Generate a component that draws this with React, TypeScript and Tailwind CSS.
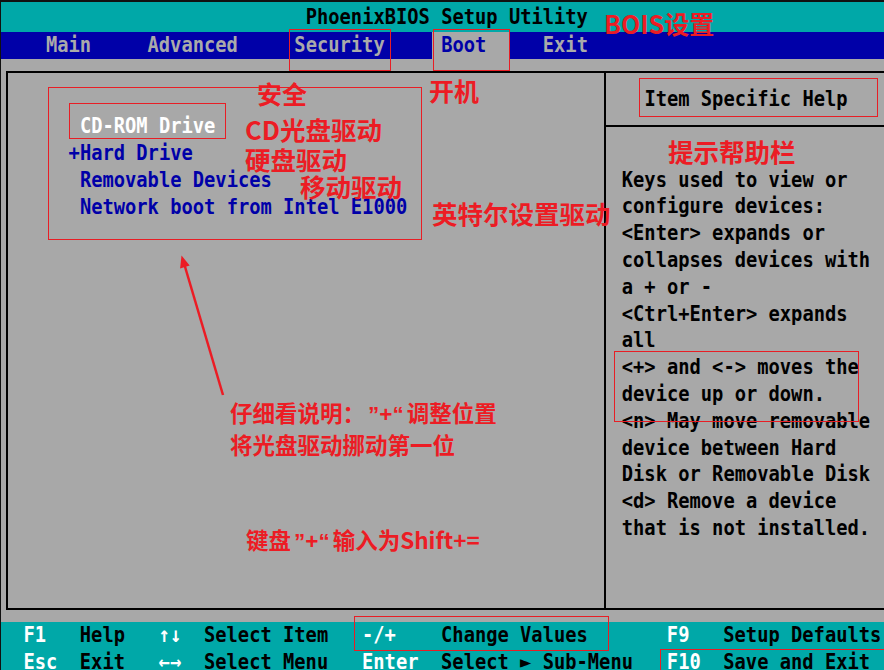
import type { ReactNode } from "react";
import clsx from "clsx";

// VGA text-mode look: one cell is 11.29px wide, 26.8px tall
function T({ children, className }: { children: ReactNode; className?: string }) {
  return (
    <span className={clsx("inline-block whitespace-pre scale-y-[1.15]", className)}>
      {children}
    </span>
  );
}

// the quote marks in the notes are narrow (latin) ones, not full-width
function Q({ children }: { children: ReactNode }) {
  return <span className="font-['Liberation_Sans',sans-serif] px-[3px]">{children}</span>;
}

const bootItems = [
  { text: " CD-ROM Drive", color: "text-white" },
  { text: "+Hard Drive", color: "text-[#0000a8]" },
  { text: " Removable Devices", color: "text-[#0000a8]" },
  { text: " Network boot from Intel E1000", color: "text-[#0000a8]" },
];

const helpLines = [
  "Keys used to view or",
  "configure devices:",
  "<Enter> expands or",
  "collapses devices with",
  "a + or -",
  "<Ctrl+Enter> expands",
  "all",
  "<+> and <-> moves the",
  "device up or down.",
  "<n> May move removable",
  "device between Hard",
  "Disk or Removable Disk",
  "<d> Remove a device",
  "that is not installed.",
];

const statusRows = [
  ["F1", "Help", "↑↓", "Select Item", "-/+", "Change Values", "F9", "Setup Defaults"],
  ["Esc", "Exit", "←→", "Select Menu", "Enter", "Select ► Sub-Menu", "F10", "Save and Exit"],
];

const note =
  "absolute leading-none whitespace-nowrap [text-spacing-trim:space-all] font-['Noto_Sans_CJK_SC',sans-serif] font-bold text-[#ec1c24]";

const App = () => {
  return (
    <div className="relative w-[884px] h-[670px] overflow-hidden bg-[#a8a8a8]">
      <div className="h-full border-t-2 border-l border-[#111] font-['DejaVu_Sans_Mono',monospace] text-[18.75px] font-bold flex flex-col">
        {/* title */}
        <div className="h-[30px] shrink-0 bg-[#00a8a8] flex items-center pl-[304.7px] text-black">
          <T>PhoenixBIOS Setup Utility</T>
        </div>

        {/* menu bar */}
        <div className="h-[27px] shrink-0 bg-[#0000a8] flex items-stretch text-[#aaaaaa]">
          <div className="flex items-center pl-[45px]">
            <T>Main</T>
          </div>
          <div className="flex items-center ml-[56.4px]">
            <T>Advanced</T>
          </div>
          <div className="flex items-center ml-[56.5px]">
            <T>Security</T>
          </div>
          <div className="flex items-center ml-[47.3px] w-[77px] pl-[9.2px] bg-[#a8a8a8] text-[#0000a8]">
            <T>Boot</T>
          </div>
          <div className="flex items-center ml-[33.8px]">
            <T>Exit</T>
          </div>
        </div>

        <div className="h-[12px] shrink-0" />

        {/* main frame */}
        <div className="h-[539px] shrink-0 w-[900px] ml-[5px] border-2 border-black flex">
          <div className="w-[596px] shrink-0 pt-[40.2px] pl-[60.6px]">
            {bootItems.map((item) => (
              <div key={item.text} className={clsx("h-[26.8px] leading-[26.8px]", item.color)}>
                <T>{item.text}</T>
              </div>
            ))}
          </div>

          <div className="flex-1 border-l-2 border-black flex flex-col text-black">
            <div className="h-[54px] shrink-0 border-b-2 border-black flex items-center pl-[38.4px]">
              <T>Item Specific Help</T>
            </div>
            <div className="pt-[39.6px] pl-[15.8px]">
              {helpLines.map((line) => (
                <div key={line} className="h-[26.8px] leading-[26.8px]">
                  <T>{line}</T>
                </div>
              ))}
            </div>
          </div>
        </div>

        <div className="h-[12px] shrink-0" />

        {/* key legend */}
        <div className="flex-1 bg-[#00a8a8] pl-[22.4px]">
          <div className="grid grid-cols-[56.45px_79.03px_45.16px_158.06px_79.03px_225.8px_56.45px_1fr] auto-rows-[26.8px] leading-[26.8px] whitespace-nowrap">
            {statusRows.map((row) =>
              row.map((cell, i) => (
                <div key={row[0] + i} className={i % 2 === 0 ? "text-white" : "text-black"}>
                  <T>{cell}</T>
                </div>
              ))
            )}
          </div>
        </div>
      </div>

      {/* red annotations drawn over the screenshot */}
      <div className="absolute left-[289px] top-[29px] w-[102px] h-[42px] border border-[#e81e25]" />
      <div className="absolute left-[433px] top-[29px] w-[77px] h-[42px] border border-[#e81e25]" />
      <div className="absolute left-[48px] top-[87px] w-[374px] h-[153px] border border-[#e81e25]" />
      <div className="absolute left-[69px] top-[103px] w-[157px] h-[36px] border border-[#e81e25]" />
      <div className="absolute left-[639px] top-[78px] w-[239px] h-[39px] border border-[#e81e25]" />
      <div className="absolute left-[614px] top-[351px] w-[245px] h-[71px] border border-[#e81e25]" />
      <div className="absolute left-[354px] top-[616px] w-[255px] h-[35px] border border-[#e81e25]" />
      <div className="absolute left-[660px] top-[649px] w-[240px] h-[30px] border border-[#e81e25]" />

      <div className={clsx(note, "left-[604px] top-[11px] text-[25px]")}>BOIS设置</div>
      <div className={clsx(note, "left-[257px] top-[80.5px] text-[25px]")}>安全</div>
      <div className={clsx(note, "left-[429px] top-[77.5px] text-[25px]")}>开机</div>
      <div className={clsx(note, "left-[245px] top-[115.5px] text-[25.5px]")}>CD光盘驱动</div>
      <div className={clsx(note, "left-[245px] top-[145.5px] text-[25.5px]")}>硬盘驱动</div>
      <div className={clsx(note, "left-[300px] top-[172.5px] text-[25.5px]")}>移动驱动</div>
      <div className={clsx(note, "left-[432px] top-[199.5px] text-[25.5px]")}>英特尔设置驱动</div>
      <div className={clsx(note, "left-[668px] top-[137.5px] text-[25.5px]")}>提示帮助栏</div>
      <div className={clsx(note, "left-[230px] top-[400.5px] text-[22.5px]")}>
        仔细看说明：<Q>”+“</Q>调整位置
      </div>
      <div className={clsx(note, "left-[230px] top-[432.5px] text-[22.5px]")}>将光盘驱动挪动第一位</div>
      <div className={clsx(note, "left-[246px] top-[527.5px] text-[22.5px]")}>
        键盘<Q>”+“</Q>输入为Shift+=
      </div>

      <svg className="absolute left-0 top-0 pointer-events-none" width="884" height="670" viewBox="0 0 884 670">
        <line x1="223" y1="395" x2="184.5" y2="265" stroke="#ec1c24" strokeWidth="2.5" />
        <polygon points="181.5,255.5 189.7,265.6 180.1,268.4" fill="#ec1c24" />
      </svg>
    </div>
  );
};

export default App;
